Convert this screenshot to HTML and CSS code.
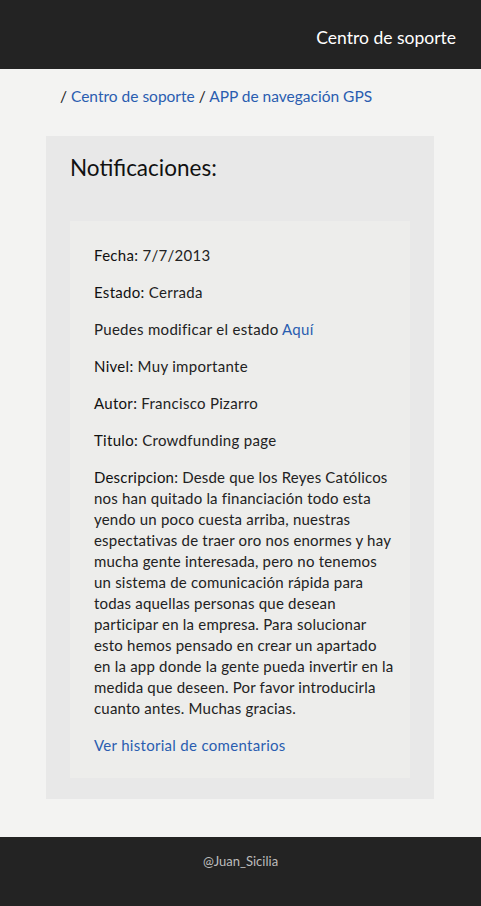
FILE: index.html
```html
<!DOCTYPE html>
<html lang="es">
<head>
<meta charset="utf-8">
<title>Centro de soporte</title>
<link rel="stylesheet" href="styles.css">
</head>
<body>
<header class="topbar">
  <span class="brand">Centro de soporte</span>
</header>
<main class="main">
  <nav class="crumbs">/ <a href="#">Centro de soporte</a> / <a href="#">APP de navegación GPS</a></nav>
  <section class="panel">
    <h1 class="panel-title">Notificaciones:</h1>
    <div class="card">
      <p class="row"><span class="label">Fecha:</span> 7/7/2013</p>
      <p class="row"><span class="label">Estado:</span> Cerrada</p>
      <p class="row">Puedes modificar el estado <a href="#">Aquí</a></p>
      <p class="row"><span class="label">Nivel:</span> Muy importante</p>
      <p class="row"><span class="label">Autor:</span> Francisco Pizarro</p>
      <p class="row"><span class="label">Titulo:</span> Crowdfunding page</p>
      <p class="row desc"><span class="label">Descripcion:</span> Desde que los Reyes Católicos<br>
      nos han quitado la financiación todo esta<br>
      yendo un poco cuesta arriba, nuestras<br>
      espectativas de traer oro nos enormes y hay<br>
      mucha gente interesada, pero no tenemos<br>
      un sistema de comunicación rápida para<br>
      todas aquellas personas que desean<br>
      participar en la empresa. Para solucionar<br>
      esto hemos pensado en crear un apartado<br>
      en la app donde la gente pueda invertir en la<br>
      medida que deseen. Por favor introducirla<br>
      cuanto antes. Muchas gracias.</p>
      <p class="row last"><a href="#">Ver historial de comentarios</a></p>
    </div>
  </section>
</main>
<footer class="footer">@Juan_Sicilia</footer>
</body>
</html>
```
FILE: styles.css
```css
* { box-sizing: border-box; }
html, body { margin: 0; padding: 0; }
body {
  background: #f3f3f2;
  font-family: Lato, "DejaVu Sans", sans-serif;
  color: #222;
}
a { color: #2a5db0; text-decoration: none; }
.topbar {
  background: #232323;
  height: 69px;
  display: flex;
  align-items: center;
  justify-content: flex-end;
  padding: 6px 25px 0 0;
}
.brand { color: #fff; font-size: 17.5px; }
.main { padding: 16px 47px 38px 46px; }
.crumbs {
  font-size: 15.5px;
  line-height: 22px;
  padding-left: 14px;
  color: #222;
  margin-bottom: 29px;
}
.panel {
  background: #e8e8e8;
  padding: 16px 24px 21px 24px;
}
.panel-title {
  margin: 0 0 37px;
  font-weight: normal;
  font-size: 22.5px;
  line-height: 32px;
  color: #111;
}
.card {
  background: #ededeb;
  padding: 24px 6px 22px 24px;
}
.row {
  margin: 0 0 16px;
  font-size: 15px;
  line-height: 21px;
  letter-spacing: 0.3px;
  color: #222;
}
.desc { letter-spacing: 0.2px; }
.row.last { margin-bottom: 0; }
.label { color: #111; }
.footer {
  background: #232323;
  height: 69px;
  color: #bdbdbd;
  font-size: 13px;
  text-align: center;
  padding-top: 16px;
}
```
